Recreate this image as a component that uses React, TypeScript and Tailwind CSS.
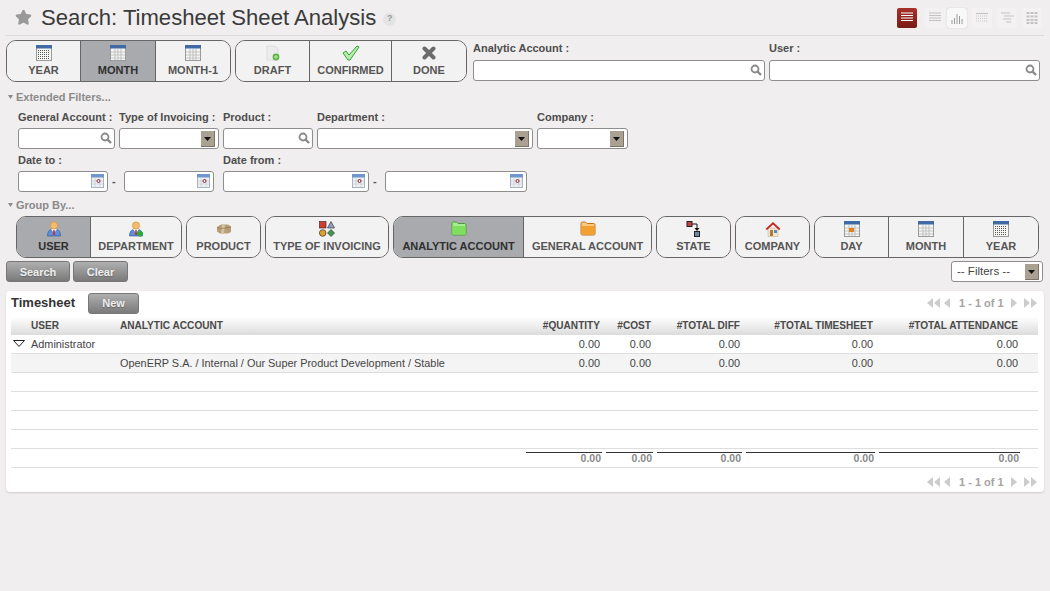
import { Star } from 'lucide-react';

const FONT = "font-['Liberation_Sans',Arial,sans-serif]";

function CalIcon({ kind }: { kind: 'year' | 'month' | 'day' }) {
    const lines = [5, 8, 11];
    const dotX = [2, 4, 6, 8, 10, 12];
    const dotY = [5, 7, 9, 11, 13];
    return (
        <svg width="16" height="16" viewBox="0 0 16 16">
            <rect x="0.5" y="0.5" width="15" height="15" fill="#f6f6f2" stroke="#9a9a9a" />
            <rect x="0" y="0" width="16" height="3.5" fill="#3f6aa3" />
            {kind === 'year'
                ? dotY.map((y) => dotX.map((x) => <rect key={`${x}-${y}`} x={x} y={y} width="1" height="1" fill="#555" />))
                : lines.map((n) => (
                      <g key={n}>
                          <line x1={n} y1="4" x2={n} y2="15" stroke="#bbb" />
                          <line x1="1" y1={n + 2} x2="15" y2={n + 2} stroke="#c4c4c4" />
                      </g>
                  ))}
            {kind === 'day' && <rect x="5" y="7" width="5" height="4" fill="#e0801f" />}
        </svg>
    );
}

function DraftIcon() {
    return (
        <svg width="16" height="16" viewBox="0 0 16 16">
            <path d="M2 1h8l3 3v11H2z" fill="#ececec" stroke="#dcdcdc" />
            <circle cx="11" cy="12" r="3.4" fill="#5cb445" />
            <path d="M9 12h4M11 10v4" stroke="#bfe8b0" strokeWidth="1" />
        </svg>
    );
}

function CheckIcon() {
    return (
        <svg width="18" height="16" viewBox="0 0 18 16">
            <path d="M1 8l3-2 3 4L15 1l2 1-9 13h-2z" fill="#b7ecac" stroke="#32a332" strokeWidth="1" strokeLinejoin="round" />
        </svg>
    );
}

function CrossIcon() {
    return (
        <svg width="14" height="14" viewBox="0 0 14 14">
            <path d="M2.5 2.5l9 9M11.5 2.5l-9 9" stroke="#6b6b6b" strokeWidth="4" strokeLinecap="round" />
        </svg>
    );
}

function PersonIcon({ plus }: { plus?: boolean }) {
    return (
        <svg width="16" height="16" viewBox="0 0 16 16">
            <path d="M1.5 15c0-5 2.5-7 6.5-7s6.500 2 6.500 7z" fill="#5a8fe0" stroke="#2a4f90" strokeWidth="0.6" />
            <path d="M5 8h6L8 12z" fill="#fff" />
            <path d="M7.300 9h1.400l.4 5H6.900z" fill="#c8322a" />
            <circle cx="8" cy="4.500" r="3.700" fill="#f2bc6c" stroke="#c88a32" strokeWidth="0.5" />
            {plus && <path d="M9 12.500h6M12 9.500v6" stroke="#22b02e" strokeWidth="2.600" />}
        </svg>
    );
}

function BoxIcon() {
    return (
        <svg width="16" height="16" viewBox="0 0 16 16">
            <path d="M1 6l4-2.500h7l3 2v5.500l-3 1.500H4l-3-2z" fill="#b79d78" />
            <path d="M6 3.500l-1 9.500h3l1-9.500z" fill="#d7c4a3" />
            <path d="M1 6.500l5 1 9-1.500" stroke="#8f7652" strokeWidth="0.7" fill="none" />
        </svg>
    );
}

function ShapesIcon() {
    return (
        <svg width="16" height="16" viewBox="0 0 16 16">
            <rect x="0.500" y="0.500" width="6.500" height="6.500" fill="#d23c2e" stroke="#222" strokeWidth="0.6" />
            <path d="M12 0.500l3.500 6.500h-7z" fill="#8fa3c0" stroke="#222" strokeWidth="0.6" />
            <circle cx="3.700" cy="12" r="3.300" fill="#e0a030" stroke="#222" strokeWidth="0.6" />
            <path d="M12 8.500l3.500 3.500-3.500 3.500-3.500-3.500z" fill="#3f9a4f" stroke="#222" strokeWidth="0.6" />
        </svg>
    );
}

function FolderIcon({ fill, edge, tab }: { fill: string; edge: string; tab: string }) {
    return (
        <svg width="16" height="15" viewBox="0 0 16 15">
            <path d="M1 2.500C1 1.500 1.500 1 2.500 1h3l1.500 1.500h6.500c1 0 1.500.5 1.500 1.500v8.500c0 1-.5 1.500-1.500 1.500h-11c-1 0-1.500-.5-1.500-1.500z" fill={tab} stroke={edge} />
            <path d="M1.500 5h13v8.500h-13z" fill={fill} />
        </svg>
    );
}

function StateIcon() {
    return (
        <svg width="16" height="16" viewBox="0 0 16 16">
            <rect x="1" y="0.500" width="5" height="5" fill="#c0453c" stroke="#222" />
            <path d="M6 3h5v5" stroke="#111" strokeWidth="1" fill="none" />
            <path d="M8.500 7h5L11 10z" fill="#111" />
            <rect x="8.500" y="10.500" width="5" height="5" fill="#6a8aa8" stroke="#222" />
        </svg>
    );
}

function HouseIcon() {
    return (
        <svg width="16" height="16" viewBox="0 0 16 16">
            <path d="M3 7h10v8.500H3z" fill="#efe6d2" stroke="#bba98a" strokeWidth="0.5" />
            <path d="M0.500 8L8 1l7.500 7-1.500 1L8 3.500 2 9z" fill="#c8201e" />
            <rect x="5" y="9" width="3" height="6" fill="#b07a3a" />
            <rect x="9" y="9" width="3" height="3" fill="#5f86c0" />
        </svg>
    );
}

function GroupButton({ label, icon, active, last }: { label: string; icon: React.ReactNode; active?: boolean; last?: boolean }) {
    return (
        <div
            className={`flex h-full flex-col items-center justify-start pt-[3px] ${last ? '' : 'border-r border-[#666]'} ${active ? 'bg-[#a8aaad] text-[#2f2f2f]' : 'bg-[#f3f2f2] text-[#555]'}`}
        >
            <div className="flex h-[17px] items-center justify-center">{icon}</div>
            <div className="mt-[2px] text-[11px] leading-[14px] font-bold whitespace-nowrap">{label}</div>
        </div>
    );
}

type Item = { label: string; icon: React.ReactNode; width: number; active?: boolean };

function ButtonGroup({ items, className }: { items: Item[]; className?: string }) {
    const total = items.reduce((s, i) => s + i.width, 0);
    return (
        <div className={`flex h-[42px] shrink-0 overflow-hidden rounded-[10px] border border-[#666] ${className ?? ''}`} style={{ width: total }}>
            {items.map((it, i) => (
                <div key={it.label} className="h-full" style={{ width: it.width - (i === items.length - 1 ? 2 : 0) }}>
                    <GroupButton label={it.label} icon={it.icon} active={it.active} last={i === items.length - 1} />
                </div>
            ))}
        </div>
    );
}

function Lens() {
    return (
        <svg width="12" height="12" viewBox="0 0 12 12" className="absolute top-[3px] right-[2px]">
            <circle cx="5" cy="5" r="3.500" fill="none" stroke="#8a8a8a" strokeWidth="1.800" />
            <path d="M7.500 7.500L11 11" stroke="#8a8a8a" strokeWidth="2.400" />
        </svg>
    );
}

function SelectArrow() {
    return (
        <div className="absolute top-[2px] right-[3px] flex h-[16px] w-[14px] items-center justify-center border-r border-b border-[#7d7568] bg-[#aaa193]">
            <svg width="7" height="4" viewBox="0 0 7 4"><path d="M0 0h7L3.500 4z" fill="#111" /></svg>
        </div>
    );
}

function DateIcon() {
    return (
        <svg width="13" height="14" viewBox="0 0 13 14" className="absolute top-[2px] right-[3px]">
            <rect x="0.500" y="0.500" width="12" height="13" fill="#eef0f2" stroke="#a8b4c4" />
            <rect x="0" y="0" width="13" height="3.500" fill="#6f97cc" />
            <path d="M1 7h11M1 10h11M4 4v9M9 4v9" stroke="#c6ccd4" strokeWidth="0.7" />
            <circle cx="7.500" cy="7" r="1.500" fill="#fff" stroke="#8c1c2a" />
        </svg>
    );
}

function Field({ width, kind, text }: { width: number; kind?: 'lens' | 'select' | 'date'; text?: string }) {
    return (
        <div className="relative h-[21px] shrink-0 rounded-[3px] border border-[#8e8e8e] bg-white pl-[5px] text-[11.5px] leading-[19px] text-[#444]" style={{ width }}>
            {text}
            {kind === 'lens' && <Lens />}
            {kind === 'select' && <SelectArrow />}
            {kind === 'date' && <DateIcon />}
        </div>
    );
}

function FilterField({ label, width, kind }: { label: string; width: number; kind?: 'lens' | 'select' }) {
    return (
        <div className="shrink-0" style={{ width }}>
            <div className="h-[18px] text-[11px] leading-[14px] font-bold whitespace-nowrap text-[#4d4d4d]">{label}</div>
            <Field width={width} kind={kind} />
        </div>
    );
}

function Section({ label }: { label: string }) {
    return (
        <div className="ml-[2px] flex items-center gap-[3px] text-[11px] leading-[14px] font-bold text-[#8a8a8a]">
            <svg width="5" height="4" viewBox="0 0 5 4"><path d="M0 0h5L2.500 4z" fill="#8a8a8a" /></svg>
            {label}
        </div>
    );
}

function GrayButton({ label, width, className }: { label: string; width: number; className?: string }) {
    return (
        <button
            className={`h-[21px] shrink-0 rounded-[3px] border border-[#777] bg-gradient-to-b from-[#b0b0b0] to-[#7a7a7a] text-[11px] leading-[18px] font-bold text-[#eeeeee] [text-shadow:0_1px_1px_#666] ${className ?? ''}`}
            style={{ width }}
        >
            {label}
        </button>
    );
}

function Tri({ dir }: { dir: 'l' | 'r' }) {
    return (
        <svg width="6" height="10" viewBox="0 0 6 10">
            <path d={dir === 'l' ? 'M6 0v10L0 5z' : 'M0 0v10l6-5z'} fill="#cccccc" />
        </svg>
    );
}

function Pager() {
    return (
        <div className="flex items-center text-[11px] leading-[14px] font-bold text-[#a4a4a4]">
            <span className="flex gap-[1px]"><Tri dir="l" /><Tri dir="l" /></span>
            <span className="ml-[4px] flex"><Tri dir="l" /></span>
            <span className="mr-[8px] ml-[9px] w-[44px] whitespace-nowrap">1 - 1 of 1</span>
            <span className="flex"><Tri dir="r" /></span>
            <span className="ml-[7px] flex gap-[1px]"><Tri dir="r" /><Tri dir="r" /></span>
        </div>
    );
}

function ViewIcon({ active, bright, className, children }: { active?: boolean; bright?: boolean; className?: string; children: React.ReactNode }) {
    return (
        <div
            className={`flex h-[20px] w-[20px] items-center justify-center rounded-[2px] ${active ? 'bg-gradient-to-b from-[#a8322a] to-[#7a1a14]' : bright ? 'bg-[#f8f8f8] shadow-[0_0_1px_#aaa]' : 'bg-[#f3f1f1]'} ${className ?? ''}`}
        >
            {children}
        </div>
    );
}

function ViewSwitcher() {
    return (
        <div className="flex items-center">
            <ViewIcon active>
                <svg width="12" height="11" viewBox="0 0 12 11"><path d="M0 1h12M0 3.500h12M0 6h12M0 8.500h12" stroke="#fff" strokeWidth="1.200" /></svg>
            </ViewIcon>
            <ViewIcon className="ml-[8px]">
                <svg width="12" height="11" viewBox="0 0 12 11"><path d="M0 1h12M0 3.500h12M0 6h12M0 8.500h12" stroke="#c2c2c2" strokeWidth="1" /></svg>
            </ViewIcon>
            <ViewIcon bright className="ml-[2px]">
                <svg width="12" height="12" viewBox="0 0 12 12"><path d="M1 12V8M3.500 12V6M6 12V2M8.500 12V4M11 12V7" stroke="#9a9a9a" strokeWidth="1" /></svg>
            </ViewIcon>
            <ViewIcon className="ml-[5px]">
                <svg width="12" height="12" viewBox="0 0 12 12"><path d="M0 1.500h12" stroke="#c0c0c0" /><path d="M0 4h12M0 6.500h12M0 9h12" stroke="#c8c8c8" strokeDasharray="1 1" /></svg>
            </ViewIcon>
            <ViewIcon className="ml-[5px]">
                <svg width="13" height="11" viewBox="0 0 13 11"><path d="M0 1h9M3 4h10M2 7h8M5 10h5" stroke="#c4c4c4" /></svg>
            </ViewIcon>
            <ViewIcon className="ml-[5px]">
                <svg width="12" height="12" viewBox="0 0 12 12"><path d="M0.500 1h3M4.500 1h3M8.500 1h3M0.500 4.500h3M4.500 4.500h3M8.500 4.500h3M0.500 8h3M4.500 8h3M8.500 8h3M0.500 11h3M4.500 11h3M8.500 11h3" stroke="#c4c4c4" strokeWidth="2" /></svg>
            </ViewIcon>
        </div>
    );
}

const cols = ['#QUANTITY', '#COST', '#TOTAL DIFF', '#TOTAL TIMESHEET', '#TOTAL ATTENDANCE'];
const numCell = 'pr-[4px] text-right';

function DataRow({ analytic, user, shaded, caret }: { analytic?: string; user?: string; shaded?: boolean; caret?: boolean }) {
    return (
        <tr className={`border-b border-[#dedede] text-[10.9px] leading-[14px] text-[#444] ${caret ? 'h-[18px]' : 'h-[19px]'} ${shaded ? 'bg-[#f4f4f4]' : ''}`}>
            <td className="pl-[2px]">
                {caret && <svg width="12" height="7" viewBox="0 0 12 7"><path d="M0.500 0.500h11L6 6.500z" fill="#fff" stroke="#222" /></svg>}
            </td>
            <td className="whitespace-nowrap">{user}</td>
            <td className="pl-[4px] whitespace-nowrap">{analytic}</td>
            {cols.map((c) => (
                <td key={c} className={numCell}>0.00</td>
            ))}
            <td />
        </tr>
    );
}

export default function App() {
    return (
        <div className={`${FONT} h-[591px] w-[1050px] overflow-hidden bg-[#f0eeee] px-[6px]`}>
            {/* title bar */}
            <div className="flex h-[36px] items-center justify-between border-b border-[#dcdcdc] pr-[2px]">
                <div className="flex items-center">
                    <Star size={17} fill="#999" stroke="#999" className="ml-[9px]" />
                    <h1 className="ml-[9px] text-[22.1px] leading-[28px] text-[#3a3a3a]">Search: Timesheet Sheet Analysis</h1>
                    <div className="mt-[3px] ml-[7px] flex h-[13px] w-[13px] items-center justify-center rounded-full bg-[#e4e4e4] text-[9px] font-bold text-[#999]">?</div>
                </div>
                <ViewSwitcher />
            </div>

            {/* top filters */}
            <div className="mt-[4px] flex">
                <ButtonGroup
                    items={[
                        { label: 'YEAR', icon: <CalIcon kind="year" />, width: 74 },
                        { label: 'MONTH', icon: <CalIcon kind="month" />, width: 75, active: true },
                        { label: 'MONTH-1', icon: <CalIcon kind="month" />, width: 76 },
                    ]}
                />
                <ButtonGroup
                    className="ml-[4px]"
                    items={[
                        { label: 'DRAFT', icon: <DraftIcon />, width: 74 },
                        { label: 'CONFIRMED', icon: <CheckIcon />, width: 82 },
                        { label: 'DONE', icon: <CrossIcon />, width: 76 },
                    ]}
                />
                <div className="ml-[6px] w-[292px] shrink-0">
                    <div className="h-[20px] pt-[1px] text-[11px] leading-[14px] font-bold text-[#4d4d4d]">Analytic Account :</div>
                    <Field width={292} kind="lens" />
                </div>
                <div className="ml-[4px] w-[271px] shrink-0">
                    <div className="h-[20px] pt-[1px] text-[11px] leading-[14px] font-bold text-[#4d4d4d]">User :</div>
                    <Field width={271} kind="lens" />
                </div>
            </div>

            {/* extended filters */}
            <div className="mt-[8px]"><Section label="Extended Filters..." /></div>
            <div className="mt-[6px] ml-[12px] flex gap-[4px]">
                <FilterField label="General Account :" width={97} kind="lens" />
                <FilterField label="Type of Invoicing :" width={100} kind="select" />
                <FilterField label="Product :" width={90} kind="lens" />
                <FilterField label="Department :" width={216} kind="select" />
                <FilterField label="Company :" width={91} kind="select" />
            </div>
            <div className="mt-[4px] ml-[12px] flex gap-[9px]">
                <div className="w-[196px] shrink-0">
                    <div className="h-[18px] text-[11px] leading-[14px] font-bold text-[#4d4d4d]">Date to :</div>
                    <div className="flex items-center">
                        <Field width={90} kind="date" />
                        <span className="w-[16px] pl-[4px] text-[11px] font-bold text-[#555]">-</span>
                        <Field width={90} kind="date" />
                    </div>
                </div>
                <div className="w-[304px] shrink-0">
                    <div className="h-[18px] text-[11px] leading-[14px] font-bold text-[#4d4d4d]">Date from :</div>
                    <div className="flex items-center">
                        <Field width={146} kind="date" />
                        <span className="w-[16px] pl-[4px] text-[11px] font-bold text-[#555]">-</span>
                        <Field width={142} kind="date" />
                    </div>
                </div>
            </div>

            {/* group by */}
            <div className="mt-[6px]"><Section label="Group By..." /></div>
            <div className="mt-[4px] ml-[10px] flex gap-[4px]">
                <ButtonGroup
                    items={[
                        { label: 'USER', icon: <PersonIcon />, width: 74, active: true },
                        { label: 'DEPARTMENT', icon: <PersonIcon plus />, width: 92 },
                    ]}
                />
                <ButtonGroup items={[{ label: 'PRODUCT', icon: <BoxIcon />, width: 75 }]} />
                <ButtonGroup items={[{ label: 'TYPE OF INVOICING', icon: <ShapesIcon />, width: 124 }]} />
                <ButtonGroup
                    items={[
                        { label: 'ANALYTIC ACCOUNT', icon: <FolderIcon fill="#7fe060" edge="#4a9a3a" tab="#a8ec90" />, width: 130, active: true },
                        { label: 'GENERAL ACCOUNT', icon: <FolderIcon fill="#f2a030" edge="#c27418" tab="#f8c880" />, width: 129 },
                    ]}
                />
                <ButtonGroup items={[{ label: 'STATE', icon: <StateIcon />, width: 75 }]} />
                <ButtonGroup items={[{ label: 'COMPANY', icon: <HouseIcon />, width: 75 }]} />
                <ButtonGroup
                    items={[
                        { label: 'DAY', icon: <CalIcon kind="day" />, width: 74 },
                        { label: 'MONTH', icon: <CalIcon kind="month" />, width: 75 },
                        { label: 'YEAR', icon: <CalIcon kind="year" />, width: 76 },
                    ]}
                />
            </div>

            {/* actions */}
            <div className="mt-[3px] flex h-[21px] items-center pr-[1px]">
                <GrayButton label="Search" width={64} />
                <GrayButton label="Clear" width={55} className="ml-[3px]" />
                <div className="ml-auto flex"><Field width={92} kind="select" text="-- Filters --" /></div>
            </div>

            {/* list panel */}
            <div className="mt-[9px] h-[201px] rounded-[4px] bg-white px-[5px] shadow-[0_1px_2px_#ccc]">
                <div className="flex h-[26px] items-center justify-between pr-[2px] pb-[2px]">
                    <div className="flex items-center">
                        <span className="w-[77px] text-[13px] font-bold text-[#333]">Timesheet</span>
                        <GrayButton label="New" width={51} />
                    </div>
                    <Pager />
                </div>
                <table className="w-[1027px] table-fixed border-collapse">
                    <colgroup>
                        <col className="w-[20px]" />
                        <col className="w-[85px]" />
                        <col className="w-[408px]" />
                        <col className="w-[80px]" />
                        <col className="w-[51px]" />
                        <col className="w-[89px]" />
                        <col className="w-[133px]" />
                        <col className="w-[145px]" />
                        <col />
                    </colgroup>
                    <thead>
                        <tr className="h-[18px] bg-gradient-to-b from-white to-[#dcdcdc] text-[10.1px] leading-[14px] font-bold text-[#4a4a4a]">
                            <th />
                            <th className="text-left">USER</th>
                            <th className="pl-[4px] text-left">ANALYTIC ACCOUNT</th>
                            {cols.map((c) => (
                                <th key={c} className={`${numCell} whitespace-nowrap`}>{c}</th>
                            ))}
                            <th />
                        </tr>
                    </thead>
                    <tbody>
                        <DataRow user="Administrator" caret />
                        <DataRow analytic="OpenERP S.A. / Internal / Our Super Product Development / Stable" shaded />
                        <tr className="h-[19px] border-b border-[#dedede]"><td colSpan={9} /></tr>
                        <tr className="h-[19px] border-b border-[#dedede]"><td colSpan={9} /></tr>
                        <tr className="h-[19px] border-b border-[#dedede]"><td colSpan={9} /></tr>
                        <tr className="h-[19px] border-b border-[#dedede]"><td colSpan={9} /></tr>
                        <tr className="h-[19px] border-b border-[#dedede] text-[10.5px] font-bold text-[#8a8a8a]">
                            <td colSpan={3} />
                            {cols.map((c) => (
                                <td key={c} className="px-[2px] align-top">
                                    <div className="mt-[3px] h-[14px] border-t border-[#333] pr-[1px] text-right leading-[11px]">0.00</div>
                                </td>
                            ))}
                            <td />
                        </tr>
                    </tbody>
                </table>
                <div className="mt-[7px] flex justify-end pr-[2px]"><Pager /></div>
            </div>
        </div>
    );
}
